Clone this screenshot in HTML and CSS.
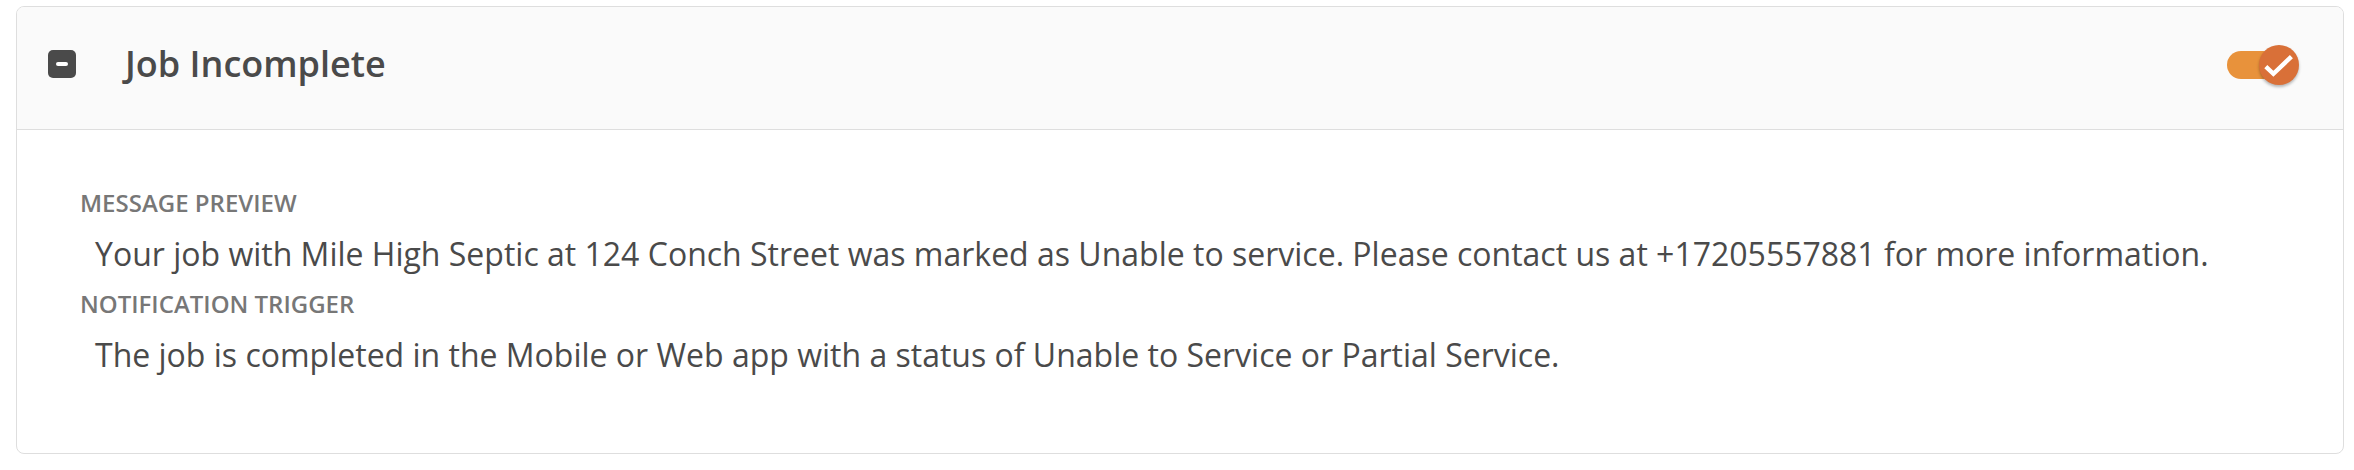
FILE: index.html
```html
<!DOCTYPE html>
<html lang="en">
<head>
<meta charset="utf-8">
<title>Job Incomplete</title>
<link rel="stylesheet" href="styles.css">
</head>
<body>
<div class="page">
  <section class="card">
    <header class="card-header">
      <span class="collapse-icon" aria-hidden="true"><span class="dash"></span></span>
      <h2 class="title">Job Incomplete</h2>
      <span class="toggle" role="switch" aria-checked="true">
        <span class="track"></span>
        <span class="knob">
          <svg viewBox="0 0 40 40" width="40" height="40"><path d="M6.8 21.6 L14.4 28.8 L32.4 11.6" fill="none" stroke="#fff" stroke-width="4.4" stroke-linecap="butt" stroke-linejoin="miter"/></svg>
        </span>
      </span>
    </header>
    <div class="card-body">
      <div class="label">Message Preview</div>
      <p class="text">Your job with Mile High Septic at 124 Conch Street was marked as Unable to service. Please contact us at +17205557881 for more information.</p>
      <div class="label">Notification Trigger</div>
      <p class="text">The job is completed in the Mobile or Web app with a status of Unable to Service or Partial Service.</p>
    </div>
  </section>
</div>
</body>
</html>
```

FILE: styles.css
```css
html, body {
  margin: 0;
  padding: 0;
  background: #ffffff;
}

body {
  font-family: "Open Sans", "Noto Sans", "Liberation Sans", sans-serif;
  color: #4a4a4a;
}

.page {
  padding: 6px 10px 0 16px;
}

.card {
  border: 1px solid #dedede;
  border-radius: 8px;
  overflow: hidden;
  background: #ffffff;
}

.card-header {
  display: flex;
  align-items: center;
  height: 114px;
  padding: 0 44px 8px 31px;
  background: #fafafa;
  border-bottom: 1px solid #dedede;
}

.collapse-icon {
  display: flex;
  align-items: center;
  justify-content: center;
  width: 28px;
  height: 28px;
  border-radius: 5px;
  background: #4a4a4a;
  flex: none;
}

.collapse-icon .dash {
  width: 12px;
  height: 4px;
  border-radius: 2px;
  background: #ffffff;
}

.title {
  margin: 0 0 0 49px;
  font-size: 36px;
  font-weight: 600;
  line-height: 48px;
  color: #4a4a4a;
  flex: 1;
}

.toggle {
  position: relative;
  display: block;
  width: 72px;
  height: 40px;
  margin-top: 2px;
  flex: none;
}

.toggle .track {
  position: absolute;
  left: 0;
  top: 6px;
  width: 50px;
  height: 28px;
  border-radius: 14px;
  background: #e8923b;
}

.toggle .knob {
  position: absolute;
  right: 0;
  top: 0;
  width: 40px;
  height: 40px;
  border-radius: 50%;
  background: #d97038;
  box-shadow: 0 2px 3px rgba(0, 0, 0, 0.28);
  display: flex;
  align-items: center;
  justify-content: center;
}

.toggle .knob svg {
  display: block;
}

.card-body {
  padding: 57px 40px 76px 63px;
}

.label {
  font-size: 24px;
  font-weight: 600;
  line-height: 32px;
  text-transform: uppercase;
  color: #777777;
  margin-bottom: 13px;
}

.text {
  margin: 0 0 12px 15px;
  font-size: 32px;
  line-height: 44px;
  color: #4a4a4a;
}

.text:last-child {
  margin-bottom: 0;
}
```
